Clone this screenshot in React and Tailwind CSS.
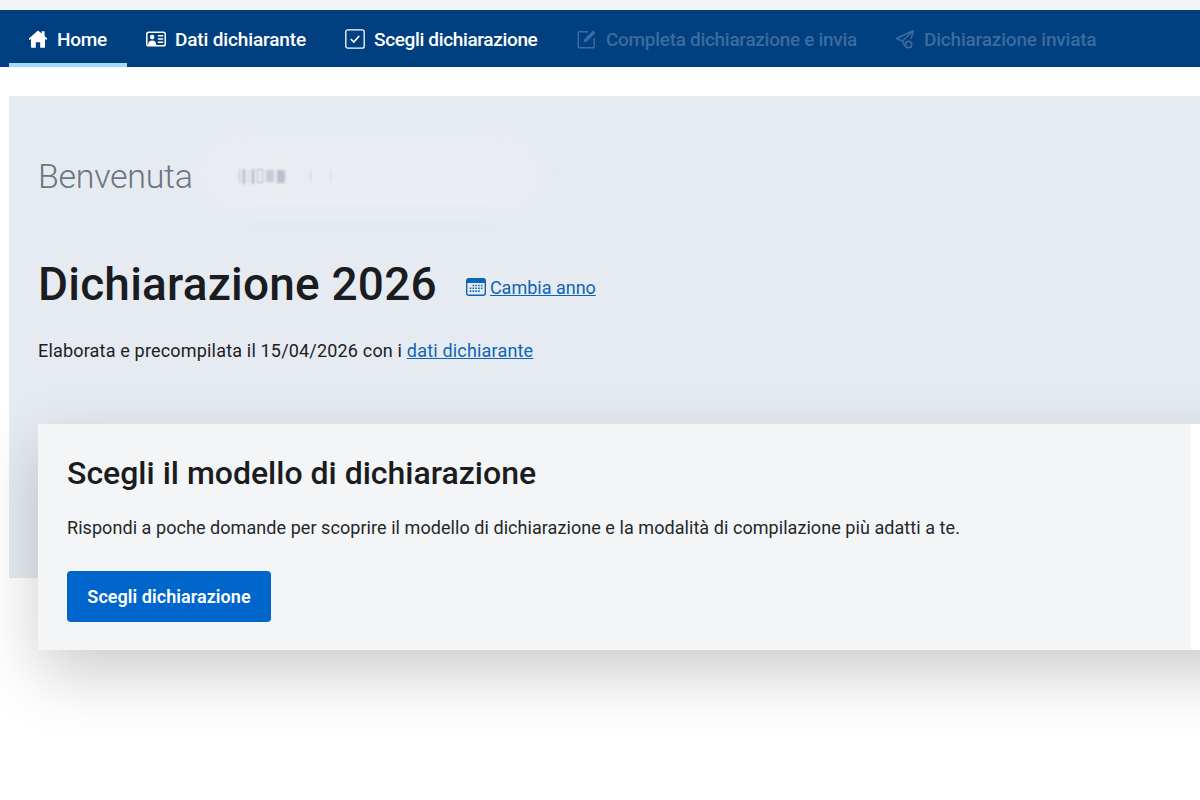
const font = "font-['Roboto','Liberation_Sans',sans-serif]";

function HomeIcon() {
  return (
    <svg viewBox="0 0 20 18" className="w-[20px] h-[18px]" fill="currentColor">
      <path d="M10 0.5 0.6 8.8l1.1 1.3L3 9v8a.8.8 0 0 0 .8.8h4v-5.6h4.4v5.6h4a.8.8 0 0 0 .8-.8V9l1.3 1.1 1.1-1.3L16.6 6V1.2h-2.8v2.3z" />
    </svg>
  );
}

function IdCardIcon() {
  return (
    <svg viewBox="0 0 21 16" className="w-[21px] h-[16px]" fill="none">
      <rect x="0.8" y="0.8" width="19.4" height="14.4" rx="2" stroke="currentColor" strokeWidth="1.6" />
      <circle cx="6.5" cy="6" r="2.4" fill="currentColor" />
      <path d="M2.2 14.5c0-3.6 1.8-5 4.3-5s4.3 1.4 4.3 5z" fill="currentColor" />
      <path d="M12.5 4.5h5.5M12.5 8h5.5M12.5 11.5h5.5" stroke="currentColor" strokeWidth="1.5" />
    </svg>
  );
}

function CheckBoxIcon() {
  return (
    <svg viewBox="0 0 20 20" className="w-[20px] h-[20px]" fill="none" stroke="currentColor">
      <rect x="0.8" y="0.8" width="18.4" height="18.4" rx="2" strokeWidth="1.3" />
      <path d="m5.8 10 3 3 5.4-6" strokeWidth="1.6" />
    </svg>
  );
}

function EditIcon() {
  return (
    <svg viewBox="0 0 20 20" className="w-[20px] h-[20px]" fill="none" stroke="currentColor">
      <path d="M11 2.8H2.2a1 1 0 0 0-1 1v14a1 1 0 0 0 1 1h14a1 1 0 0 0 1-1V9" strokeWidth="1.5" />
      <path d="m6.5 13.5 1-3.5 8.5-8.5 2.5 2.5-8.5 8.5z" fill="currentColor" stroke="none" />
    </svg>
  );
}

function PlaneCheckIcon() {
  return (
    <svg viewBox="0 0 20 20" className="w-[20px] h-[20px]" fill="none" stroke="currentColor" strokeWidth="1.5">
      <path d="M18.5 1.5 1.5 9.5l6 2.5 2 5M18.5 1.5 7.5 12M18.5 1.5 16 10" strokeLinejoin="round" />
      <circle cx="13.5" cy="15.5" r="3.2" strokeWidth="1.8" />
    </svg>
  );
}

function CalendarIcon() {
  return (
    <svg viewBox="0 0 20 18" className="w-[20px] h-[18px] text-[#0f65b5]" fill="none">
      <rect x="0.7" y="0.7" width="18.6" height="16.6" rx="2" stroke="currentColor" strokeWidth="1.4" />
      <path d="M1 2.5a2 2 0 0 1 2-2h14a2 2 0 0 1 2 2v2.5H1z" fill="currentColor" />
      <path d="M6.5 7.5h1.6M9.3 7.5h1.6M12.1 7.5h1.6M14.9 7.5h1.6M3.7 10.3h1.6M6.5 10.3h1.6M9.3 10.3h1.6M12.1 10.3h1.6M14.9 10.3h1.6M3.7 13.1h1.6M6.5 13.1h1.6M9.3 13.1h1.6M12.1 13.1h1.6" stroke="currentColor" strokeWidth="1.6" />
    </svg>
  );
}

function NavItem({ icon, label, active, disabled, width, tracking }) {
  return (
    <div
      className={
        "h-full flex items-center gap-[9px] pl-[19px] pt-[4px] border-b-[4px] text-[19px] font-medium " +
        width + " " +
        (active ? "border-[#a6d8fa] " : "border-transparent ") +
        (disabled ? "text-[#3a6c9f]" : "text-white")
      }
    >
      <span className="w-[20px] flex justify-center shrink-0">{icon}</span>
      <span className={"pt-[3px] whitespace-nowrap " + tracking}>{label}</span>
    </div>
  );
}

// the name is smudged out in the picture
function RedactedName() {
  return (
    <div className="relative ml-[8px] w-[340px] h-[44px]">
      <div className="absolute left-0 top-[-18px] w-[340px] h-[76px] rounded-[50px] bg-[#e9edf2] blur-sm"></div>
      <div className="absolute left-[38px] top-[14px] flex gap-[3px] items-center h-[16px] blur-[1px]">
        <span className="w-[1px] h-[14px] bg-[#b8c0cb]"></span>
        <span className="w-[2px] h-[15px] bg-[#a9b2be]"></span>
        <span className="w-[1px] h-[12px] bg-[#c4cbd5]"></span>
        <span className="w-[2px] h-[15px] bg-[#a9b2be]"></span>
        <span className="w-[6px] h-[14px] border border-[#b3bcc8]"></span>
        <span className="w-[8px] h-[12px] bg-[#c4cbd5]"></span>
        <span className="w-[8px] h-[13px] bg-[#b8c0cb]"></span>
        <span className="ml-[22px] w-[1px] h-[12px] bg-[#ccd3dc]"></span>
        <span className="ml-[16px] w-[1px] h-[12px] bg-[#d6dbe3]"></span>
      </div>
    </div>
  );
}

export default function App() {
  return (
    <div className={"w-[1200px] h-[800px] bg-white overflow-hidden " + font}>
      <div className="h-[10px] bg-[#f2f4f7]"></div>

      <nav className="h-[57px] bg-[#003f80] pl-[9px] flex">
        <NavItem active width="w-[118px]" tracking="tracking-[-0.3px]" label="Home" icon={<HomeIcon />} />
        <NavItem width="w-[199px]" tracking="tracking-[-0.15px]" label="Dati dichiarante" icon={<IdCardIcon />} />
        <NavItem width="w-[232px]" tracking="tracking-[-0.35px]" label="Scegli dichiarazione" icon={<CheckBoxIcon />} />
        <NavItem disabled width="w-[318px]" tracking="tracking-[-0.3px]" label="Completa dichiarazione e invia" icon={<EditIcon />} />
        <NavItem disabled width="w-[230px]" tracking="tracking-[-0.2px]" label="Dichiarazione inviata" icon={<PlaneCheckIcon />} />
      </nav>

      <main className="flow-root ml-[9px] mt-[29px] bg-[#e6ebf2] pl-[29px] pt-[58px]">
        <div className="flex items-center h-[44px]">
          <h2 className="text-[34px] font-light text-[#6b7680] tracking-[-0.3px]">Benvenuta</h2>
          <RedactedName />
        </div>

        <div className="flex items-center mt-[59px] h-[56px]">
          <h1 className="text-[46px] font-medium text-[#1a1c1f] tracking-[0.2px] whitespace-nowrap mb-[2px]">Dichiarazione 2026</h1>
          <a className="flex items-center gap-[4px] ml-[29px] mt-[4px] text-[18px] text-[#0f65b5]">
            <CalendarIcon />
            <span className="underline">Cambia anno</span>
          </a>
        </div>

        <p className="mt-[25px] text-[18px] leading-[26px] text-[#1c2024] tracking-[0.18px]">
          Elaborata e precompilata il 15/04/2026 con i <a className="underline text-[#0f65b5]">dati dichiarante</a>
        </p>

        <section className="mt-[60px] -mb-[72px] w-[1300px] bg-white shadow-[0_24px_60px_rgba(0,0,0,0.2)]">
          <div className="w-[1153px] h-[226px] bg-[#f3f5f7] pl-[29px] pt-[28px]">
            <h3 className="text-[32px] leading-[42px] font-medium text-[#1a1c1f]">Scegli il modello di dichiarazione</h3>
            <p className="mt-[21px] text-[18px] leading-[26px] text-[#23272b] tracking-[0.06px]">
              Rispondi a poche domande per scoprire il modello di dichiarazione e la modalità di compilazione più adatti a te.
            </p>
            <button className="mt-[30px] w-[204px] h-[51px] bg-[#0066cc] rounded-[4px] text-white text-[18px] font-semibold tracking-[0.05px]">
              Scegli dichiarazione
            </button>
          </div>
        </section>
      </main>
    </div>
  );
}
